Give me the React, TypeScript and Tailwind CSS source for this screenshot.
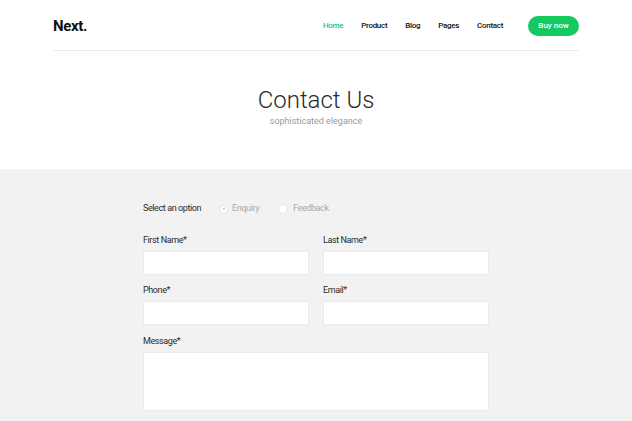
import React from 'react';

const Field = ({ label }: { label: string }) => (
  <div className="flex flex-col">
    <label className="text-[9px] tracking-[-0.4px] text-[#2b2b2b] leading-[10px] mb-[6px]">{label}</label>
    <div className="h-[24px] bg-white border border-[#e9eaea]" />
  </div>
);

const App = () => {
  const nav = ['Home', 'Product', 'Blog', 'Pages', 'Contact'];

  return (
    <div className="w-full min-h-[421px] bg-white font-['Roboto',sans-serif]">
      <header className="px-[53px]">
        <div className="flex items-center justify-between h-[51px] pt-[2px] border-b border-[#ececec]">
          <p className="text-[15px] font-bold text-[#111] tracking-tight">Next.</p>
          <div className="flex items-center">
            <nav className="flex items-center gap-[18px] text-[8px] tracking-[-0.3px] font-medium text-[#111]">
              {nav.map((item, i) => (
                <a key={item} className={i === 0 ? 'text-[#1ec76b]' : ''}>
                  {item}
                </a>
              ))}
            </nav>
            <button className="ml-[25px] w-[51px] h-[20px] rounded-full bg-[#14c95f] text-white text-[8px] font-medium">
              Buy now
            </button>
          </div>
        </div>
      </header>

      <section className="flex flex-col items-center pt-[35px] h-[118px]">
        <h1 className="text-[24px] font-light text-[#2a2a2a] leading-[28px]">Contact Us</h1>
        <p className="text-[9px] text-[#9a9a9a] mt-[1px]">sophisticated elegance</p>
      </section>

      <section className="bg-[#f1f2f1] pt-[34px] pb-[12px]">
        <div className="w-[346px] mx-auto">
          <div className="flex items-center text-[9px] tracking-[-0.4px] h-[12px]">
            <span className="text-[#2b2b2b]">Select an option</span>
            <label className="flex items-center ml-[18px] text-[#aaa]">
              <span className="w-[9px] h-[9px] rounded-full bg-white border border-[#e2e2e2] flex items-center justify-center">
                <span className="w-[2px] h-[2px] rounded-full bg-[#bbb]" />
              </span>
              <span className="ml-[4px]">Enquiry</span>
            </label>
            <label className="flex items-center ml-[19px] text-[#aaa]">
              <span className="w-[10px] h-[10px] rounded-full bg-white border border-[#e2e2e2]" />
              <span className="ml-[5px]">Feedback</span>
            </label>
          </div>

          <div className="grid grid-cols-2 gap-x-[14px] gap-y-[10px] mt-[20px]">
            <Field label="First Name*" />
            <Field label="Last Name*" />
            <Field label="Phone*" />
            <Field label="Email*" />
            <div className="col-span-2 flex flex-col mt-[1px]">
              <label className="text-[9px] tracking-[-0.4px] text-[#2b2b2b] leading-[10px] mb-[6px]">Message*</label>
              <div className="h-[59px] bg-white border border-[#e9eaea]" />
            </div>
          </div>
        </div>
      </section>
    </div>
  );
};

export default App;
